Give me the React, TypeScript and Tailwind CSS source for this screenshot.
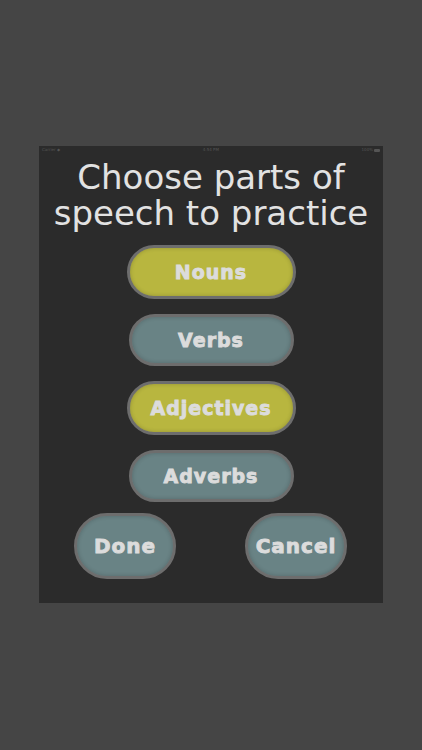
import React from 'react';

type Part = { label: string; selected: boolean };

const parts: Part[] = [
  { label: 'Nouns', selected: true },
  { label: 'Verbs', selected: false },
  { label: 'Adjectives', selected: true },
  { label: 'Adverbs', selected: false },
];

const font = { fontFamily: '"DejaVu Sans", "Liberation Sans", sans-serif' };

export default function App() {
  return (
    <div className="w-[422px] h-[750px] bg-[#454545] pt-[146px]" style={font}>
      <div className="mx-[39px] w-[344px] h-[457px] bg-[#2b2b2b] flex flex-col">
        {/* status bar */}
        <div className="h-[8px] px-[3px] flex items-center justify-between text-[4px] leading-none text-[#555]">
          <span>Carrier ◆</span>
          <span>4:54 PM</span>
          <span className="flex items-center gap-[1px]">
            100%
            <span className="inline-block w-[6px] h-[3px] bg-[#555] rounded-[1px]" />
          </span>
        </div>

        <h1 className="mt-[5px] text-center text-[34px] leading-[36px] font-normal text-[#e2e2e2]">
          Choose parts of
          <br />
          speech to practice
        </h1>

        <div className="mt-[7px] flex flex-col items-center">
          {parts.map((p) => (
            <div key={p.label} className="h-[68px] flex items-center justify-center">
              <button
                className={`rounded-full border-[3px] border-[#6d6d6d] shadow-[inset_0_0_4px_rgba(0,0,0,0.2)] flex items-center justify-center font-bold text-[19px] tracking-[1px] text-[#dcdcdc] [-webkit-text-stroke:0.9px_#dcdcdc] ${
                  p.selected ? 'w-[169px] h-[54px] bg-[#b8b63f]' : 'w-[165px] h-[52px] bg-[#698385]'
                }`}
              >
                {p.label}
              </button>
            </div>
          ))}
        </div>

        <div className="mt-[3px] flex justify-between pl-[35px] pr-[36px]">
          <button className="w-[102px] h-[66px] rounded-full border-[3px] border-[#6d6d6d] shadow-[inset_0_0_4px_rgba(0,0,0,0.2)] bg-[#698385] font-bold text-[20px] tracking-[1px] text-[#dcdcdc] [-webkit-text-stroke:0.9px_#dcdcdc]">
            Done
          </button>
          <button className="w-[102px] h-[66px] rounded-full border-[3px] border-[#6d6d6d] shadow-[inset_0_0_4px_rgba(0,0,0,0.2)] bg-[#698385] font-bold text-[20px] tracking-[1px] text-[#dcdcdc] [-webkit-text-stroke:0.9px_#dcdcdc]">
            Cancel
          </button>
        </div>
      </div>
    </div>
  );
}
